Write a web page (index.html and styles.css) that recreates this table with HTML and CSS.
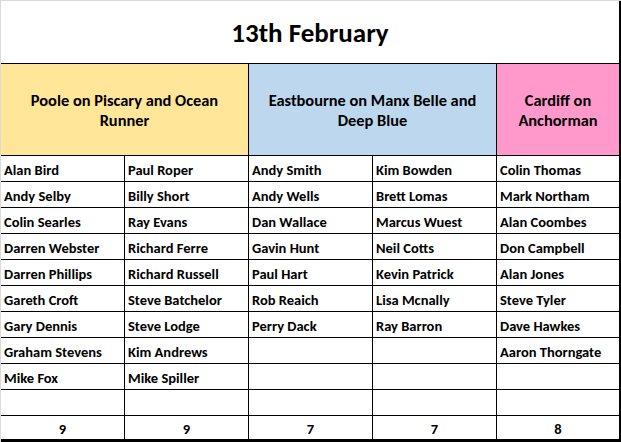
FILE: index.html
```html
<!DOCTYPE html>
<html>
<head>
<meta charset="utf-8">
<link rel="stylesheet" href="styles.css">
</head>
<body>
<div class="sheet">
  <div class="grid">
    <div class="cell title">13th February</div>
    <div class="cell head yellow">Poole on Piscary and Ocean<br>Runner</div>
    <div class="cell head blue">Eastbourne on Manx Belle and<br>Deep Blue</div>
    <div class="cell head pink">Cardiff on<br>Anchorman</div>

    <div class="cell">Alan Bird</div><div class="cell">Paul Roper</div><div class="cell">Andy Smith</div><div class="cell">Kim Bowden</div><div class="cell">Colin Thomas</div>
    <div class="cell">Andy Selby</div><div class="cell">Billy Short</div><div class="cell">Andy Wells</div><div class="cell">Brett Lomas</div><div class="cell">Mark Northam</div>
    <div class="cell">Colin Searles</div><div class="cell">Ray Evans</div><div class="cell">Dan Wallace</div><div class="cell">Marcus Wuest</div><div class="cell">Alan Coombes</div>
    <div class="cell">Darren Webster</div><div class="cell">Richard Ferre</div><div class="cell">Gavin Hunt</div><div class="cell">Neil Cotts</div><div class="cell">Don Campbell</div>
    <div class="cell">Darren Phillips</div><div class="cell">Richard Russell</div><div class="cell">Paul Hart</div><div class="cell">Kevin Patrick</div><div class="cell">Alan Jones</div>
    <div class="cell">Gareth Croft</div><div class="cell">Steve Batchelor</div><div class="cell">Rob Reaich</div><div class="cell">Lisa Mcnally</div><div class="cell">Steve Tyler</div>
    <div class="cell">Gary Dennis</div><div class="cell">Steve Lodge</div><div class="cell">Perry Dack</div><div class="cell">Ray Barron</div><div class="cell">Dave Hawkes</div>
    <div class="cell">Graham Stevens</div><div class="cell">Kim Andrews</div><div class="cell"></div><div class="cell"></div><div class="cell">Aaron Thorngate</div>
    <div class="cell">Mike Fox</div><div class="cell">Mike Spiller</div><div class="cell"></div><div class="cell"></div><div class="cell"></div>
    <div class="cell"></div><div class="cell"></div><div class="cell"></div><div class="cell"></div><div class="cell"></div>

    <div class="cell total">9</div><div class="cell total">9</div><div class="cell total">7</div><div class="cell total">7</div><div class="cell total">8</div>
  </div>
</div>
</body>
</html>
```

FILE: styles.css
```css
html, body {
  margin: 0;
  padding: 0;
  background: #ffffff;
}

.sheet {
  width: 621px;
  height: 442px;
  box-sizing: border-box;
  border-top: 1px solid #dadada;
  border-left: 1px solid #dadada;
  font-family: Carlito, Lato, "Liberation Sans", sans-serif;
  font-weight: 700;
  color: #000;
}

.grid {
  display: grid;
  grid-template-columns: 123px 123px 123px 123px 122px;
  grid-template-rows: 62px 91px repeat(10, 25px) 23px;
  gap: 1px;
  background: #000;
  border-right: 2px solid #000;
  border-bottom: 3px solid #000;
}

.cell {
  background: #fff;
  font-size: 14.5px;
  display: flex;
  align-items: center;
  padding: 2px 0 0 3px;
  box-sizing: border-box;
  white-space: nowrap;
  overflow: hidden;
}

.title {
  grid-column: 1 / 6;
  justify-content: center;
  font-size: 27px;
  padding: 0;
}

.head {
  justify-content: center;
  text-align: center;
  line-height: 20px;
  font-size: 16.4px;
  padding: 0;
}

.yellow {
  grid-column: 1 / 3;
  background: #ffe699;
}

.blue {
  grid-column: 3 / 5;
  background: #bdd7ee;
}

.pink {
  background: #ff99cc;
}

.total {
  justify-content: center;
  padding: 2px 0 0 0;
}
```
